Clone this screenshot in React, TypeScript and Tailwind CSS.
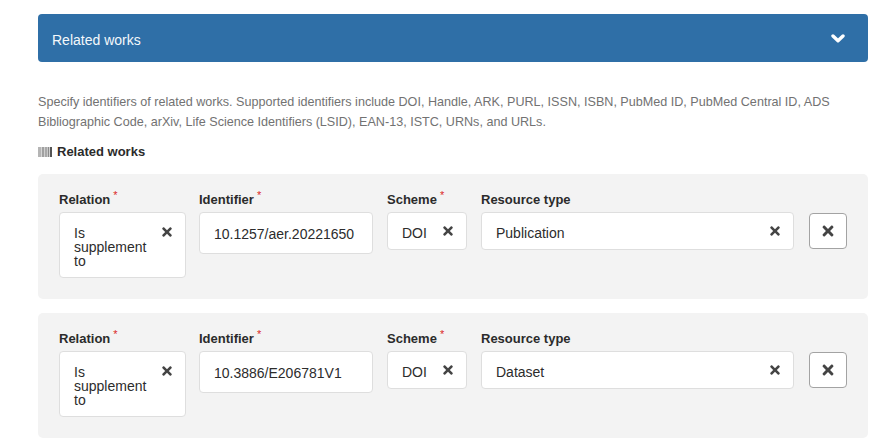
import { FaTimes } from "react-icons/fa";

function Label({ text, required }: { text: string; required?: boolean }) {
  return (
    <div className="flex h-[38px] items-start pt-[16px] text-[13px] leading-[20px] font-bold text-[#2b2b2b]">
      <span>{text}</span>
      {required && <span className="ml-[3px] -mt-[3px] text-[11px] leading-[16px] font-normal text-[#db2828]">*</span>}
    </div>
  );
}

function Clear() {
  return <FaTimes className="h-[14px] w-[14px] shrink-0 text-[#444444]" />;
}

function Barcode() {
  const bars = [
    [0, 3, "#b5b5b5"],
    [3, 1, "#d5d5d5"],
    [4, 2, "#a0a0a0"],
    [6, 1, "#cfcfcf"],
    [7, 2, "#a8a8a8"],
    [9, 1, "#c8c8c8"],
    [10, 1, "#8c8c8c"],
    [11, 1, "#d0d0d0"],
    [12, 2, "#555555"],
  ] as const;
  return (
    <svg width="14" height="10" viewBox="0 0 14 10" className="mr-[5px] shrink-0">
      {bars.map(([x, w, c]) => (
        <rect key={x} x={x} y="0" width={w} height="10" fill={c} />
      ))}
    </svg>
  );
}

function Row({ identifier, resource }: { identifier: string; resource: string }) {
  return (
    <div className="flex h-[125px] items-start gap-[14px] rounded-[5px] bg-[#f3f3f3] pl-[21px]">
      <div className="w-[127px]">
        <Label text="Relation" required />
        <div className="flex h-[66px] items-start justify-between rounded-[4px] border border-[#dedede] bg-white pt-[12px] pr-[11px] pl-[14px]">
          <div className="w-[80px] pt-[1px] text-[14px] leading-[14px] text-[#2c2c2c]">Is supplement to</div>
          <Clear />
        </div>
      </div>
      <div className="-ml-[1px] w-[174px]">
        <Label text="Identifier" required />
        <div className="flex h-[42px] items-center rounded-[4px] border border-[#dedede] bg-white pt-[2px] pl-[14px] text-[14px] text-[#2c2c2c]">{identifier}</div>
      </div>
      <div className="w-[80px]">
        <Label text="Scheme" required />
        <div className="flex h-[38px] items-center justify-between rounded-[4px] border border-[#dedede] bg-white pr-[11px] pl-[14px] text-[14px] text-[#2c2c2c]">
          <span className="pt-[5px]">DOI</span>
          <Clear />
        </div>
      </div>
      <div className="w-[313px]">
        <Label text="Resource type" />
        <div className="flex h-[38px] items-center justify-between rounded-[4px] border border-[#dedede] bg-white pr-[11px] pl-[14px] text-[14px] text-[#2c2c2c]">
          <span className="pt-[5px]">{resource}</span>
          <Clear />
        </div>
      </div>
      <button className="mt-[39px] ml-[1px] flex h-[36px] w-[38px] items-center justify-center rounded-[4px] border border-[#a3a3a3] bg-white">
        <FaTimes className="h-[16px] w-[16px] text-[#444444]" />
      </button>
    </div>
  );
}

export default function App() {
  return (
    <div className="h-[443px] w-[873px] overflow-hidden bg-white pt-[14px] pr-[5px] pl-[38px] font-['Liberation_Sans',sans-serif]">
      <div className="flex h-[48px] items-center justify-between rounded-[4px] bg-[#2f6fa7] pt-[4px] pr-[23px] pl-[14px] text-[14px] text-[#f4f8fb]">
        <span>Related works</span>
        <svg width="14" height="9" viewBox="0 0 14 9" className="-mt-[4px] shrink-0">
          <polyline points="2,2 7,6.8 12,2" fill="none" stroke="white" strokeWidth="3.4" strokeLinecap="round" strokeLinejoin="round" />
        </svg>
      </div>
      <p className="mt-[30px] text-[12.6px] leading-[20px] text-[#727272]">
        Specify identifiers of related works. Supported identifiers include DOI, Handle, ARK, PURL, ISSN, ISBN, PubMed ID, PubMed Central ID, ADS Bibliographic Code, arXiv, Life Science Identifiers (LSID), EAN-13, ISTC, URNs, and URLs.
      </p>
      <div className="mt-[10px] flex h-[20px] items-center text-[13px] font-bold text-[#2b2b2b]">
        <Barcode />
        <span>Related works</span>
      </div>
      <div className="mt-[12px] flex flex-col gap-[14px]">
        <Row identifier="10.1257/aer.20221650" resource="Publication" />
        <Row identifier="10.3886/E206781V1" resource="Dataset" />
      </div>
    </div>
  );
}
